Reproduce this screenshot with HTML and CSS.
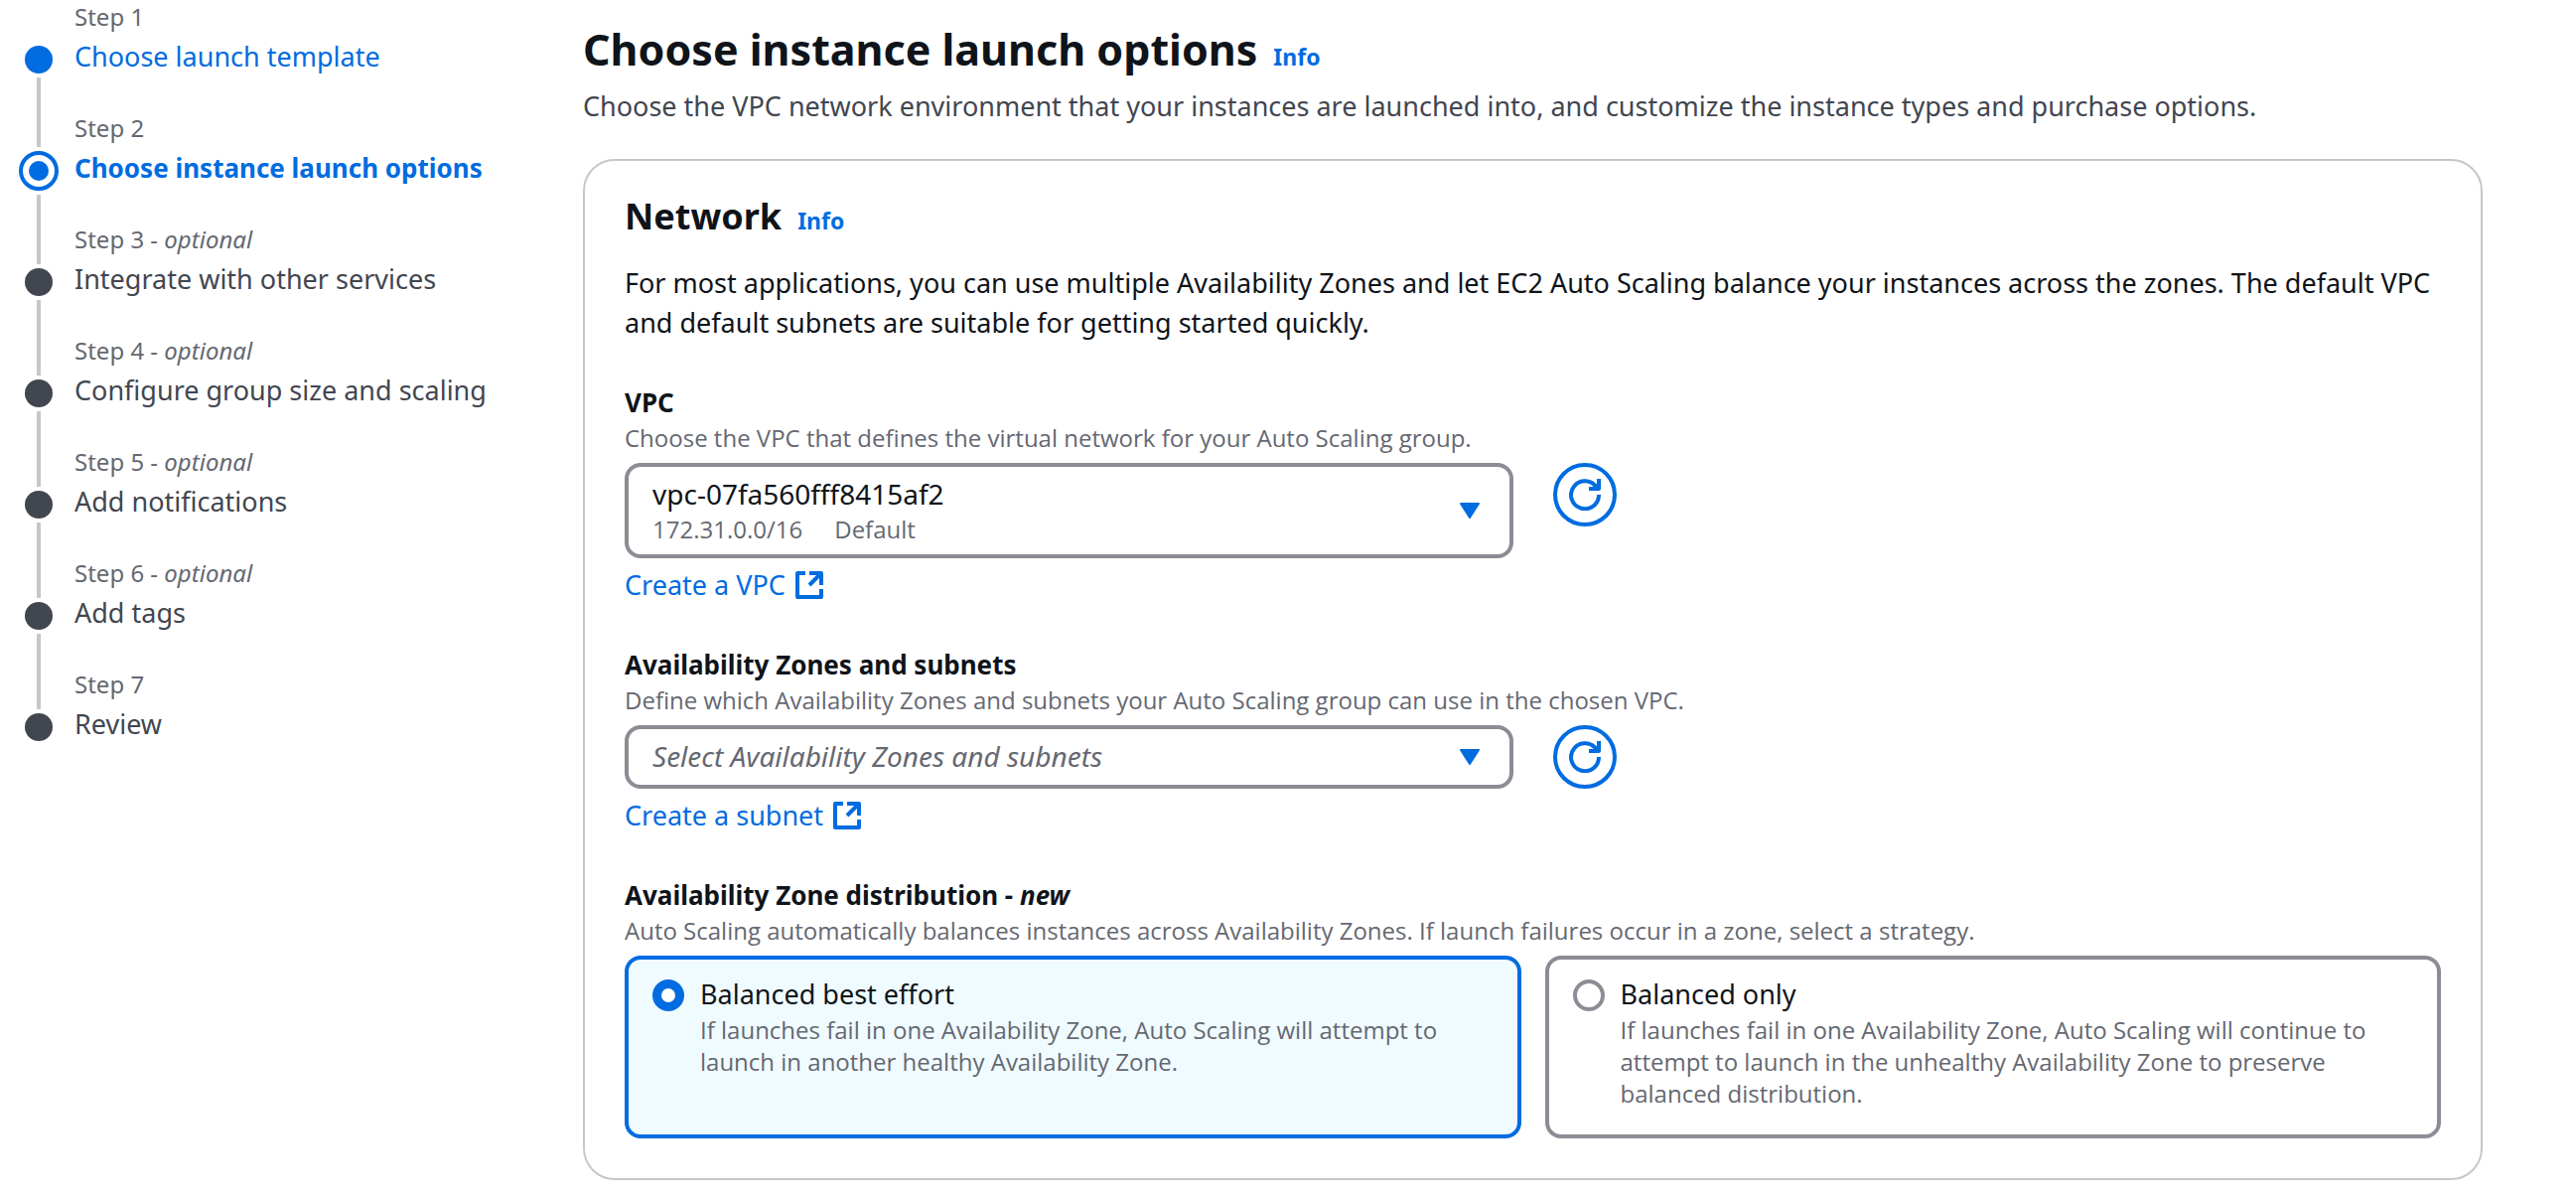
FILE: index.html
```
<!DOCTYPE html>
<html lang="en">
<head>
  <meta charset="utf-8">
  <meta name="viewport" content="width=device-width, initial-scale=1">
  <title>Choose instance launch options</title>
  <link rel="stylesheet" href="styles.css">
</head>
<body>
  <svg class="sprite" aria-hidden="true">
    <symbol id="icon-external" viewBox="0 0 16 16">
      <path d="M14 10v4H2V2h4M8 2h6v6M14 2 8 8" fill="none" stroke="currentColor" stroke-width="2" stroke-linejoin="round"/>
    </symbol>
    <symbol id="icon-refresh" viewBox="0 0 32 32">
      <path d="M30 16A14 14 0 1 1 28 9M30 0v10H20" fill="none" stroke="currentColor" stroke-width="4" stroke-linejoin="round"/>
    </symbol>
    <symbol id="icon-caret" viewBox="0 0 32 32">
      <path d="M7 9h18l-9 14z" fill="currentColor" stroke="currentColor" stroke-width="2" stroke-linejoin="round"/>
    </symbol>
  </svg>

  <div class="wizard">
    <nav aria-label="Steps">
      <ol class="steps">
        <li class="step step--visited">
          <span class="rail"><span class="rail__lead"></span><span class="rail__dot"></span><span class="rail__tail"></span></span>
          <div class="step__text"><span class="step__number">Step 1</span><a class="step__title" href="#">Choose launch template</a></div>
        </li>
        <li class="step step--active" aria-current="step">
          <span class="rail"><span class="rail__lead"></span><span class="rail__dot"></span><span class="rail__tail"></span></span>
          <div class="step__text"><span class="step__number">Step 2</span><span class="step__title">Choose instance launch options</span></div>
        </li>
        <li class="step">
          <span class="rail"><span class="rail__lead"></span><span class="rail__dot"></span><span class="rail__tail"></span></span>
          <div class="step__text"><span class="step__number">Step 3 - <i>optional</i></span><span class="step__title">Integrate with other services</span></div>
        </li>
        <li class="step">
          <span class="rail"><span class="rail__lead"></span><span class="rail__dot"></span><span class="rail__tail"></span></span>
          <div class="step__text"><span class="step__number">Step 4 - <i>optional</i></span><span class="step__title">Configure group size and scaling</span></div>
        </li>
        <li class="step">
          <span class="rail"><span class="rail__lead"></span><span class="rail__dot"></span><span class="rail__tail"></span></span>
          <div class="step__text"><span class="step__number">Step 5 - <i>optional</i></span><span class="step__title">Add notifications</span></div>
        </li>
        <li class="step">
          <span class="rail"><span class="rail__lead"></span><span class="rail__dot"></span><span class="rail__tail"></span></span>
          <div class="step__text"><span class="step__number">Step 6 - <i>optional</i></span><span class="step__title">Add tags</span></div>
        </li>
        <li class="step">
          <span class="rail"><span class="rail__lead"></span><span class="rail__dot"></span><span class="rail__tail"></span></span>
          <div class="step__text"><span class="step__number">Step 7</span><span class="step__title">Review</span></div>
        </li>
      </ol>
    </nav>

    <main>
      <header class="heading">
        <h1 class="heading__title">Choose instance launch options</h1>
        <a class="info" href="#">Info</a>
      </header>
      <p class="lead">Choose the VPC network environment that your instances are launched into, and customize the instance types and purchase options.</p>

      <section class="panel">
        <header class="heading">
          <h2 class="panel__title">Network</h2>
          <a class="info" href="#">Info</a>
        </header>
        <p class="panel__intro">For most applications, you can use multiple Availability Zones and let EC2 Auto Scaling balance your instances across the zones. The default VPC and default subnets are suitable for getting started quickly.</p>

        <div class="field">
          <label class="field__label" for="vpc">VPC</label>
          <p class="hint" id="vpc-hint">Choose the VPC that defines the virtual network for your Auto Scaling group.</p>
          <div class="field__row">
            <div class="picker picker--detailed">
              <select class="picker__control" id="vpc" aria-describedby="vpc-hint vpc-detail">
                <option>vpc-07fa560fff8415af2</option>
              </select>
              <span class="picker__detail hint" id="vpc-detail"><span>172.31.0.0/16</span><span>Default</span></span>
              <svg class="icon picker__caret" aria-hidden="true"><use href="#icon-caret"/></svg>
            </div>
            <button class="refresh" type="button" aria-label="Refresh VPCs"><svg class="icon" aria-hidden="true"><use href="#icon-refresh"/></svg></button>
          </div>
          <a class="create" href="#">Create a VPC<svg class="icon" aria-hidden="true"><use href="#icon-external"/></svg></a>
        </div>

        <div class="field">
          <label class="field__label" for="subnets">Availability Zones and subnets</label>
          <p class="hint" id="subnets-hint">Define which Availability Zones and subnets your Auto Scaling group can use in the chosen VPC.</p>
          <div class="field__row">
            <div class="picker">
              <select class="picker__control picker__control--empty" id="subnets" aria-describedby="subnets-hint">
                <option>Select Availability Zones and subnets</option>
              </select>
              <svg class="icon picker__caret" aria-hidden="true"><use href="#icon-caret"/></svg>
            </div>
            <button class="refresh" type="button" aria-label="Refresh subnets"><svg class="icon" aria-hidden="true"><use href="#icon-refresh"/></svg></button>
          </div>
          <a class="create" href="#">Create a subnet<svg class="icon" aria-hidden="true"><use href="#icon-external"/></svg></a>
        </div>

        <div class="field" role="radiogroup" aria-labelledby="distribution" aria-describedby="distribution-hint">
          <div class="field__label" id="distribution">Availability Zone distribution - <i>new</i></div>
          <p class="hint" id="distribution-hint">Auto Scaling automatically balances instances across Availability Zones. If launch failures occur in a zone, select a strategy.</p>
          <div class="tiles">
            <label class="tile" for="best-effort">
              <input class="tile__radio" type="radio" name="distribution" id="best-effort" checked>
              <span class="tile__text"><span class="tile__title">Balanced best effort</span><span class="hint">If launches fail in one Availability Zone, Auto Scaling will attempt to launch in another healthy Availability Zone.</span></span>
            </label>
            <label class="tile" for="balanced-only">
              <input class="tile__radio" type="radio" name="distribution" id="balanced-only">
              <span class="tile__text"><span class="tile__title">Balanced only</span><span class="hint">If launches fail in one Availability Zone, Auto Scaling will continue to attempt to launch in the unhealthy Availability Zone to preserve balanced distribution.</span></span>
            </label>
          </div>
        </div>
      </section>
    </main>
  </div>
</body>
</html>
```

FILE: styles.css
```
:root {
  --blue: #006ce0;
  --ink: #0f141a;
  --ink-soft: #424650;
  --ink-muted: #656871;
  --line: #c6c6cd;
  --control: #8c8c94;
}

* {
  box-sizing: border-box;
}

body {
  margin: 0;
  background: #fff;
  color: var(--ink);
  font: 27px/40px "Noto Sans", "Open Sans", sans-serif;
}

h1, h2, p, ol {
  margin: 0;
  padding: 0;
}

a {
  color: var(--blue);
  text-decoration: none;
}

.sprite {
  display: none;
}

.icon {
  display: block;
  width: 32px;
  height: 32px;
  flex: none;
}

.hint {
  color: var(--ink-muted);
  font-family: "Open Sans", "Noto Sans", sans-serif;
  font-size: 24px;
  line-height: 32px;
}

.wizard {
  display: grid;
  grid-template-columns: 528px minmax(0, 1fr);
  column-gap: 40px;
  padding: 0 94px 16px 19px;
}

/* Step list */

.steps {
  list-style: none;
}

.step {
  display: flex;
  gap: 16px;
  min-height: 112px;
}

.step__text {
  display: flex;
  flex-direction: column;
  gap: 3px;
}

.step__number {
  color: var(--ink-muted);
  font-size: 24px;
  line-height: 34px;
}

.step__title {
  color: var(--ink-soft);
}

.step--visited .step__title {
  color: var(--blue);
}

.step--active .step__title {
  color: var(--blue);
  font-size: 26px;
  font-weight: 700;
}

.rail {
  display: flex;
  flex-direction: column;
  align-items: center;
  gap: 4px;
  width: 40px;
}

.rail__lead,
.rail__tail {
  width: 4px;
  background: var(--line);
}

.rail__lead {
  height: 42px;
}

.rail__tail {
  flex: 1;
}

.step:first-child .rail__lead,
.step:last-child .rail__tail {
  visibility: hidden;
}

.rail__dot {
  width: 28px;
  height: 28px;
  border-radius: 50%;
  background: var(--ink-soft);
}

.step--visited .rail__dot {
  background: var(--blue);
}

.step--active .rail__lead {
  height: 36px;
}

.step--active .rail__dot {
  display: grid;
  place-items: center;
  width: 40px;
  height: 40px;
  border: 4px solid var(--blue);
  background: #fff;
}

.step--active .rail__dot::before {
  content: "";
  width: 20px;
  height: 20px;
  border-radius: 50%;
  background: var(--blue);
}

/* Headings */

main {
  padding-top: 20px;
}

.heading {
  display: flex;
  align-items: baseline;
  gap: 16px;
}

.heading__title {
  font-size: 43px;
  line-height: 60px;
}

.info {
  font-size: 23px;
  font-weight: 700;
  line-height: 32px;
}

.lead {
  margin-top: 7px;
  color: var(--ink-soft);
}

/* Network panel */

.panel {
  margin-top: 33px;
  padding: 32px 40px 40px;
  border: 2px solid var(--line);
  border-radius: 32px;
}

.panel__title {
  font-size: 36px;
  line-height: 48px;
}

.panel__intro {
  margin-top: 23px;
}

.field {
  margin-top: 40px;
}

.field__label {
  display: block;
  font-size: 26px;
  font-weight: 700;
}

.field__row {
  display: grid;
  grid-template-columns: 1fr 1fr;
  column-gap: 40px;
  align-items: start;
  margin-top: 9px;
}

.picker {
  display: grid;
  align-items: center;
}

.picker > * {
  grid-area: 1 / 1;
}

.picker__control {
  width: 100%;
  height: 64px;
  padding: 0 64px 2px 24px;
  border: 4px solid var(--control);
  border-radius: 16px;
  background: #fff;
  color: var(--ink);
  font: inherit;
  font-size: 28px;
  appearance: none;
}

.picker__control--empty {
  color: var(--ink-muted);
  font-style: italic;
}

.picker--detailed .picker__control {
  height: 96px;
  padding-bottom: 34px;
}

.picker__detail {
  align-self: end;
  display: flex;
  gap: 32px;
  padding: 0 28px 13px;
  pointer-events: none;
}

.picker__caret {
  justify-self: end;
  margin-right: 28px;
  color: var(--blue);
  pointer-events: none;
}

.refresh {
  display: grid;
  place-items: center;
  width: 64px;
  height: 64px;
  padding: 0;
  border: 4px solid var(--blue);
  border-radius: 50%;
  background: #fff;
  color: var(--blue);
}

.create {
  display: flex;
  align-items: center;
  gap: 8px;
  width: fit-content;
  margin-top: 7px;
}

/* Distribution tiles */

.tiles {
  display: grid;
  grid-template-columns: 1fr 1fr;
  gap: 24px;
  margin-top: 9px;
}

.tile {
  display: flex;
  align-items: flex-start;
  gap: 16px;
  padding: 15px 24px 25px;
  border: 4px solid var(--control);
  border-radius: 16px;
}

.tile:has(:checked) {
  border-color: var(--blue);
  background: #f0fbff;
}

.tile__radio {
  flex: none;
  width: 32px;
  height: 32px;
  margin: 5px 0 0;
  border: 4px solid var(--control);
  border-radius: 50%;
  background: #fff;
  appearance: none;
}

.tile__radio:checked {
  border: 9px solid var(--blue);
}

.tile__text {
  display: flex;
  flex-direction: column;
}
```
